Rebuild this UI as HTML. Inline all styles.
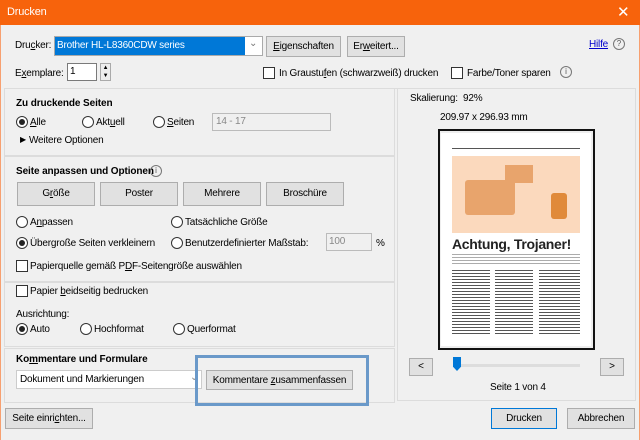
<!DOCTYPE html>
<html><head><meta charset="utf-8"><style>
*{box-sizing:border-box;margin:0;padding:0}
body{width:640px;height:440px;overflow:hidden;background:#f0f0f0;font-family:"Liberation Sans",sans-serif;font-size:10px;letter-spacing:-0.2px;color:#000;position:relative}
.a{position:absolute;white-space:nowrap}
.tb{left:0;top:0;width:640px;height:25px;background:#f7630c;color:#fff}
.btn{position:absolute;background:#e1e1e1;border:1px solid #adadad;text-align:center;line-height:19px;white-space:nowrap}
.box{position:absolute;border:1px solid #dcdcdc}
.rad{position:absolute;width:12px;height:12px;border:1px solid #333;border-radius:50%;background:#fff}
.rad.on::after{content:"";position:absolute;left:2px;top:2px;width:6px;height:6px;border-radius:50%;background:#222}
.chk{position:absolute;width:12px;height:12px;border:1px solid #333;background:#fff}
.inp{position:absolute;background:#fff;border:1px solid #7a7a7a;white-space:nowrap}
.dis{background:#f0f0f0;border-color:#bbb;color:#888}
b{font-weight:bold;letter-spacing:-0.1px}
u{text-decoration:underline}
.info{position:absolute;width:12px;height:12px;border:1px solid #777;border-radius:50%;font-size:8px;text-align:center;line-height:10px;color:#555;letter-spacing:0}
</style></head><body>
<div class="a tb"><span class="a" style="left:7px;top:6px;font-size:11px">Drucken</span><span class="a" style="left:617px;top:3px;font-size:15px">✕</span></div>
<div class="a" style="left:0;top:25px;width:1px;height:415px;background:#f7a070"></div>
<div class="a" style="left:639px;top:25px;width:1px;height:415px;background:#f7a070"></div>

<span class="a" style="left:15px;top:40px">Dru<u>c</u>ker:</span>
<div class="inp" style="left:54px;top:36px;width:209px;height:20px;border-color:#aaa"></div>
<div class="a" style="left:55px;top:37px;width:190px;height:18px;background:#0078d7;color:#fff;line-height:18px;padding-left:2px">Brother HL-L8360CDW series</div>
<span class="a" style="left:249px;top:38px;color:#777">⌄</span>
<div class="btn" style="left:266px;top:36px;width:75px;height:21px"><u>E</u>igenschaften</div>
<div class="btn" style="left:347px;top:36px;width:58px;height:21px">Er<u>w</u>eitert...</div>
<span class="a" style="left:589px;top:39px;color:#00c;text-decoration:underline">Hilfe</span>
<div class="info" style="left:613px;top:38px">?</div>

<span class="a" style="left:15px;top:68px">E<u>x</u>emplare:</span>
<div class="inp" style="left:67px;top:63px;width:30px;height:18px;padding-left:2px;line-height:16px">1</div>
<div class="a" style="left:100px;top:63px;width:11px;height:18px;border:1px solid #aaa;background:#eee;font-size:6px;text-align:center;line-height:8px">▲<br>▼</div>
<div class="chk" style="left:263px;top:67px"></div><span class="a" style="left:279px;top:68px">In Graustu<u>f</u>en (schwarzweiß) drucken</span>
<div class="chk" style="left:451px;top:67px"></div><span class="a" style="left:467px;top:68px">Farbe/Toner sparen</span>
<div class="info" style="left:560px;top:66px">i</div>

<div class="a" style="left:4px;top:88px;width:632px;height:1px;background:#dcdcdc"></div>
<div class="box" style="left:4px;top:88px;width:391px;height:68px"></div>
<b class="a" style="left:16px;top:98px">Zu druckende Seiten</b>
<div class="rad on" style="left:16px;top:116px"></div><span class="a" style="left:30px;top:117px"><u>A</u>lle</span>
<div class="rad" style="left:82px;top:116px"></div><span class="a" style="left:96px;top:117px">Akt<u>u</u>ell</span>
<div class="rad" style="left:153px;top:116px"></div><span class="a" style="left:167px;top:117px"><u>S</u>eiten</span>
<div class="inp dis" style="left:212px;top:113px;width:119px;height:18px;padding-left:3px;line-height:15px">14 - 17</div>
<span class="a" style="left:20px;top:135px;font-size:8px">▶</span><span class="a" style="left:29px;top:135px">Weitere Optionen</span>

<div class="box" style="left:4px;top:156px;width:391px;height:126px"></div>
<b class="a" style="left:16px;top:166px">Seite anpassen und Optionen</b><div class="info" style="left:150px;top:165px">i</div>
<div class="btn" style="left:17px;top:182px;width:78px;height:24px;line-height:22px">G<u>r</u>öße</div>
<div class="btn" style="left:100px;top:182px;width:78px;height:24px;line-height:22px">Poster</div>
<div class="btn" style="left:183px;top:182px;width:78px;height:24px;line-height:22px">Mehrere</div>
<div class="btn" style="left:266px;top:182px;width:78px;height:24px;line-height:22px">Broschüre</div>
<div class="rad" style="left:16px;top:216px"></div><span class="a" style="left:30px;top:217px">A<u>n</u>passen</span>
<div class="rad" style="left:171px;top:216px"></div><span class="a" style="left:185px;top:217px">Tatsächliche Größe</span>
<div class="rad on" style="left:16px;top:237px"></div><span class="a" style="left:30px;top:238px">Übergroße Seiten verkleinern</span>
<div class="rad" style="left:171px;top:237px"></div><span class="a" style="left:185px;top:238px">Benutzerdefinierter Maßstab:</span>
<div class="inp dis" style="left:326px;top:233px;width:46px;height:18px;padding-left:2px;line-height:15px">100</div>
<span class="a" style="left:376px;top:238px">%</span>
<div class="chk" style="left:16px;top:260px"></div><span class="a" style="left:30px;top:261px">Papierquelle gemäß P<u>D</u>F-Seitengröße auswählen</span>

<div class="box" style="left:4px;top:282px;width:391px;height:65px"></div>
<div class="chk" style="left:16px;top:285px"></div><span class="a" style="left:30px;top:286px">Papier <u>b</u>eidseitig bedrucken</span>
<span class="a" style="left:16px;top:309px">Ausrichtung:</span>
<div class="rad on" style="left:16px;top:323px"></div><span class="a" style="left:30px;top:324px">Auto</span>
<div class="rad" style="left:80px;top:323px"></div><span class="a" style="left:94px;top:324px">Hochformat</span>
<div class="rad" style="left:173px;top:323px"></div><span class="a" style="left:187px;top:324px">Querformat</span>

<div class="box" style="left:4px;top:348px;width:391px;height:55px"></div>
<b class="a" style="left:16px;top:354px">Ko<u>m</u>mentare und Formulare</b>
<div class="inp" style="left:16px;top:370px;width:186px;height:19px;border-color:#ccc;padding-left:3px;line-height:17px">Dokument und Markierungen</div>
<span class="a" style="left:190px;top:372px;color:#888">⌄</span>
<div class="btn" style="left:206px;top:370px;width:147px;height:20px">Kommentare <u>z</u>usammenfassen</div>
<div class="a" style="left:195px;top:355px;width:174px;height:51px;border:3px solid #6a99c9"></div>

<div class="btn" style="left:5px;top:408px;width:88px;height:21px">Seite einri<u>c</u>hten...</div>
<div class="btn" style="left:491px;top:408px;width:66px;height:21px;border:1px solid #0078d7">Drucken</div>
<div class="btn" style="left:567px;top:408px;width:68px;height:21px">Abbrechen</div>

<div class="box" style="left:397px;top:88px;width:239px;height:313px"></div>
<span class="a" style="left:410px;top:93px">Skalierung:&nbsp; 92%</span>
<span class="a" style="left:440px;top:112px">209.97 x 296.93 mm</span>
<div class="a" style="left:438px;top:129px;width:157px;height:221px;border:2px solid #111;background:#eee"></div>
<div class="a" style="left:441px;top:133px;width:150px;height:213px;background:#fff"></div>
<div class="a" style="left:452px;top:148px;width:128px;height:1px;background:#555"></div>
<div class="a" style="left:452px;top:156px;width:128px;height:77px;background:#fbd9bd"></div>
<div class="a" style="left:465px;top:180px;width:50px;height:35px;background:#e8a46c;border-radius:3px"></div>
<div class="a" style="left:505px;top:165px;width:28px;height:18px;background:#e8a46c"></div>
<div class="a" style="left:551px;top:193px;width:16px;height:26px;background:#e08a3a;border-radius:3px"></div>
<b class="a" style="left:452px;top:236px;font-size:14px;letter-spacing:-0.3px;color:#222">Achtung, Trojaner!</b>
<div class="a" style="left:452px;top:254px;width:128px;height:10px;background:repeating-linear-gradient(#888 0 1px,transparent 1px 3px);opacity:.7"></div>
<div class="a" style="left:452px;top:270px;width:38px;height:66px;background:repeating-linear-gradient(#555 0 1px,transparent 1px 3px)"></div>
<div class="a" style="left:495px;top:270px;width:38px;height:66px;background:repeating-linear-gradient(#555 0 1px,transparent 1px 3px)"></div>
<div class="a" style="left:539px;top:270px;width:41px;height:66px;background:repeating-linear-gradient(#555 0 1px,transparent 1px 3px)"></div>
<div class="btn" style="left:409px;top:358px;width:24px;height:18px;line-height:16px">&lt;</div>
<div class="btn" style="left:600px;top:358px;width:24px;height:18px;line-height:16px">&gt;</div>
<div class="a" style="left:455px;top:364px;width:125px;height:3px;background:#ddd"></div>
<div class="a" style="left:453px;top:357px;width:8px;height:14px;background:#0078d7;clip-path:polygon(0 0,100% 0,100% 70%,50% 100%,0 70%)"></div>
<span class="a" style="left:490px;top:382px">Seite 1 von 4</span>
</body></html>
